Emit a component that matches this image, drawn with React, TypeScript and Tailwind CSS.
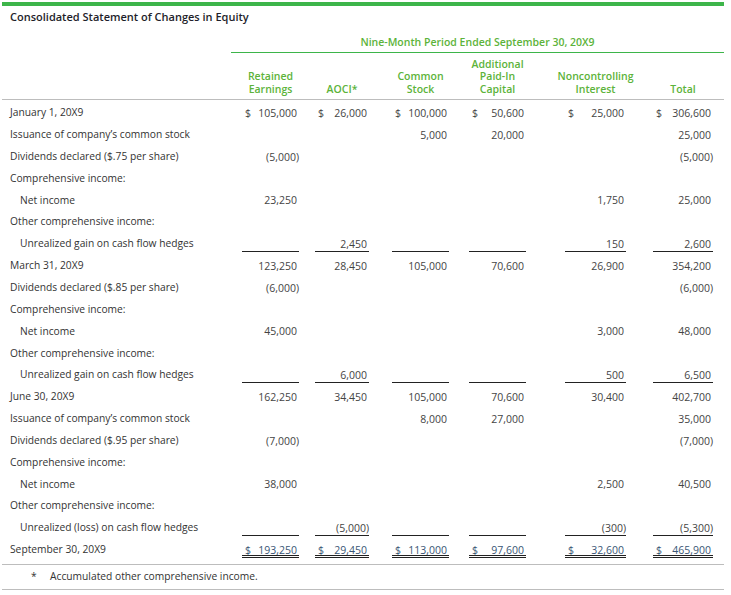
type Row = {
  label: string;
  indent?: boolean;
  vals?: string[];
  kind?: "dollar" | "under" | "double";
};

const rows: Row[] = [
  { label: "January 1, 20X9", vals: ["105,000", "26,000", "100,000", "50,600", "25,000", "306,600"], kind: "dollar" },
  { label: "Issuance of company\u2019s common stock", vals: ["", "", "5,000", "20,000", "", "25,000"] },
  { label: "Dividends declared ($.75 per share)", vals: ["(5,000)", "", "", "", "", "(5,000)"] },
  { label: "Comprehensive income:" },
  { label: "Net income", indent: true, vals: ["23,250", "", "", "", "1,750", "25,000"] },
  { label: "Other comprehensive income:" },
  { label: "Unrealized gain on cash flow hedges", indent: true, vals: ["", "2,450", "", "", "150", "2,600"], kind: "under" },
  { label: "March 31, 20X9", vals: ["123,250", "28,450", "105,000", "70,600", "26,900", "354,200"] },
  { label: "Dividends declared ($.85 per share)", vals: ["(6,000)", "", "", "", "", "(6,000)"] },
  { label: "Comprehensive income:" },
  { label: "Net income", indent: true, vals: ["45,000", "", "", "", "3,000", "48,000"] },
  { label: "Other comprehensive income:" },
  { label: "Unrealized gain on cash flow hedges", indent: true, vals: ["", "6,000", "", "", "500", "6,500"], kind: "under" },
  { label: "June 30, 20X9", vals: ["162,250", "34,450", "105,000", "70,600", "30,400", "402,700"] },
  { label: "Issuance of company\u2019s common stock", vals: ["", "", "8,000", "27,000", "", "35,000"] },
  { label: "Dividends declared ($.95 per share)", vals: ["(7,000)", "", "", "", "", "(7,000)"] },
  { label: "Comprehensive income:" },
  { label: "Net income", indent: true, vals: ["38,000", "", "", "", "2,500", "40,500"] },
  { label: "Other comprehensive income:" },
  { label: "Unrealized (loss) on cash flow hedges", indent: true, vals: ["", "(5,000)", "", "", "(300)", "(5,300)"], kind: "under" },
  { label: "September 30, 20X9", vals: ["193,250", "29,450", "113,000", "97,600", "32,600", "465,900"], kind: "double" },
];

// column boxes: margin-left and width, measured from the statement
const cols = [
  "ml-[8px] w-[57px]",
  "ml-[16px] w-[54px]",
  "ml-[23px] w-[57px]",
  "ml-[20px] w-[57px]",
  "ml-[39px] w-[61px]",
  "ml-[27px] w-[60px]",
];

const heads = [
  ["Retained", "Earnings"],
  ["AOCI*"],
  ["Common", "Stock"],
  ["Additional", "Paid-In", "Capital"],
  ["Noncontrolling", "Interest"],
  ["Total"],
];

function Cell({ v, kind, i }: { v: string; kind?: Row["kind"]; i: number }) {
  const neg = v.startsWith("(");
  const border =
    kind === "under"
      ? "border-b border-[#222]"
      : kind === "double"
      ? "border-b-[3px] border-double border-[#222]"
      : "";
  const dollar = kind === "dollar" || kind === "double";
  return (
    <div className={`${cols[i]} flex h-[14px] items-start leading-[13px] ${border}`}>
      {dollar && <span className="pl-[3px]">$</span>}
      <span className={`ml-auto ${neg ? "" : "pr-[2px]"}`}>{v}</span>
    </div>
  );
}

export default function App() {
  return (
    <div className="w-[731px] h-[595px] bg-white" style={{ fontFamily: '"Open Sans", sans-serif' }}>
      <div className="ml-[2px] w-[722px]">
        <div className="mt-[2px] h-[4px] bg-[#3db54a]" />
        <div className="mt-[4px] pl-[8px] text-[11px] leading-[14px] font-semibold text-[#1e1e2a]">
          Consolidated Statement of Changes in Equity
        </div>
        <div className="ml-[229px] mt-[11px] border-b border-[#3db54a] pb-[3px] text-center text-[10.5px] leading-[14px] font-semibold text-[#5cb33a]">
          Nine-Month Period Ended September 30, 20X9
        </div>
        <div className="flex h-[47px] items-end border-b border-[#bdbdbd] pb-[4px] text-[10.5px] leading-[12.5px] font-semibold text-[#5cb33a]">
          <div className="w-[232px]" />
          {heads.map((h, i) => (
            <div key={i} className={`${cols[i]} flex flex-col items-center whitespace-nowrap`}>
              {h.map((t) => (
                <span key={t}>{t}</span>
              ))}
            </div>
          ))}
        </div>
        <div className="pt-[2px]">
          {rows.map((r, ri) => (
            <div key={ri} className="flex h-[21.85px] items-center">
              <div className={`w-[232px] text-[10.25px] text-[#333] ${r.indent ? "pl-[18px]" : "pl-[8px]"}`}>{r.label}</div>
              {r.vals &&
                r.vals.map((v, i) => (
                  <div key={i} className={`flex h-[14px] pt-[1px] text-[10.5px] ${r.kind === "double" ? "text-[#3a5675]" : "text-[#444]"}`}>
                    <Cell v={v} kind={v === "" && r.kind !== "under" ? undefined : r.kind} i={i} />
                  </div>
                ))}
            </div>
          ))}
        </div>
        <div className="mt-[3px] flex h-[26px] items-center border-y border-[#bdbdbd] text-[10.25px] text-[#333]">
          <span className="pl-[29px] w-[48px]">*</span>
          <span>Accumulated other comprehensive income.</span>
        </div>
      </div>
    </div>
  );
}
